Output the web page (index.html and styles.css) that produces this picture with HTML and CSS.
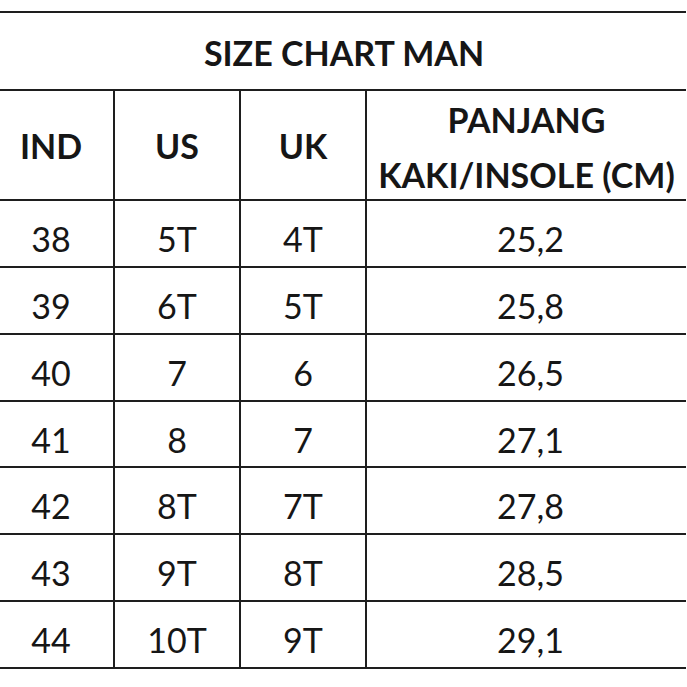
FILE: index.html
```html
<!DOCTYPE html>
<html>
<head>
<meta charset="utf-8">
<link rel="stylesheet" href="styles.css">
</head>
<body>
<div class="chart">
  <div class="cell title">SIZE CHART MAN</div>
  <div class="cell head">IND</div>
  <div class="cell head">US</div>
  <div class="cell head">UK</div>
  <div class="cell head last"><span>PANJANG</span><span>KAKI/INSOLE (CM)</span></div>

  <div class="cell">38</div><div class="cell">5T</div><div class="cell">4T</div><div class="cell last num">25,2</div>
  <div class="cell">39</div><div class="cell">6T</div><div class="cell">5T</div><div class="cell last num">25,8</div>
  <div class="cell">40</div><div class="cell">7</div><div class="cell">6</div><div class="cell last num">26,5</div>
  <div class="cell">41</div><div class="cell">8</div><div class="cell">7</div><div class="cell last num">27,1</div>
  <div class="cell">42</div><div class="cell">8T</div><div class="cell">7T</div><div class="cell last num">27,8</div>
  <div class="cell">43</div><div class="cell">9T</div><div class="cell">8T</div><div class="cell last num">28,5</div>
  <div class="cell">44</div><div class="cell">10T</div><div class="cell">9T</div><div class="cell last num">29,1</div>
</div>
</body>
</html>
```
FILE: styles.css
```css
html, body {
  margin: 0;
  padding: 0;
  background: #ffffff;
}
body {
  width: 687px;
  height: 687px;
  overflow: hidden;
  font-family: Lato, "Open Sans", sans-serif;
  color: #161616;
}
.chart {
  margin-top: 11px;
  margin-left: -11px;
  width: 697px;
  display: grid;
  grid-template-columns: 126px 126px 126px 1fr;
  grid-template-rows: 78px 110px repeat(7, 66.86px);
  border-top: 2px solid #1e1e1e;
}
.cell {
  box-sizing: border-box;
  border-bottom: 2px solid #1e1e1e;
  border-right: 2px solid #1e1e1e;
  display: flex;
  align-items: center;
  justify-content: center;
  font-size: 34px;
  padding-top: 10px;
}
.cell.last {
  border-right: none;
}
.cell.num {
  padding-left: 8px;
}
.title {
  grid-column: 1 / span 4;
  border-right: none;
  font-weight: 700;
  font-size: 34px;
  padding-top: 2px;
  padding-left: 13px;
}
.head {
  font-weight: 700;
  font-size: 34px;
  padding-top: 0;
}
.head.last {
  flex-direction: column;
  line-height: 55px;
  padding-top: 4px;
}
```
